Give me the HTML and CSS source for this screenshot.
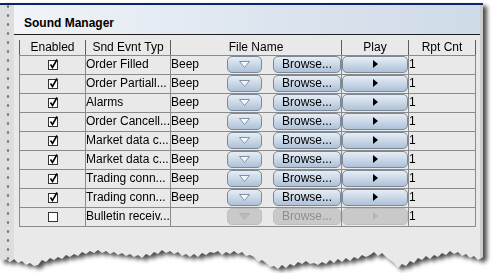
FILE: index.html
```html
<!DOCTYPE html>
<html lang="en">
<head>
    <meta charset="UTF-8">
    <meta name="viewport" content="width=device-width, initial-scale=1.0">
    <title>Sound Manager</title>
    <link rel="stylesheet" href="styles.css">
</head>
<body>
    <div class="sheet">
        <div class="paper">
            <div class="frame">
                <div class="grip"></div>
                <div class="main">
                    <div class="titlebar">Sound Manager</div>
                    <div class="content">
                        <table class="sounds">
                            <colgroup>
                                <col class="c-enabled">
                                <col class="c-type">
                                <col class="c-file">
                                <col class="c-play">
                                <col class="c-count">
                            </colgroup>
                            <thead>
                                <tr>
                                    <th>Enabled</th>
                                    <th>Snd Evnt Typ</th>
                                    <th>File Name</th>
                                    <th>Play</th>
                                    <th>Rpt Cnt</th>
                                </tr>
                            </thead>
                            <tbody>
                                <tr>
                                    <td class="check"><svg width="12" height="12" viewBox="0 0 12 12"><rect x="1.5" y="2.5" width="9" height="9" fill="#fff" stroke="#333"/><path d="M3.5 6.5 L5.5 9.5 L10 1.5" fill="none" stroke="#000" stroke-width="1.6"/></svg></td>
                                    <td>Order Filled</td>
                                    <td><div class="file"><span class="fname">Beep</span><span class="btn drop"><svg width="11" height="7" viewBox="0 0 11 7"><polygon points="0.5,0.5 10.5,0.5 5.5,6.5" fill="#f3f6fa" stroke="#8292a4"/></svg></span><span class="btn browse">Browse...</span></div></td>
                                    <td class="play-cell"><span class="btn play"><svg width="5" height="8" viewBox="0 0 5 8"><polygon points="0,0 5,4 0,8" fill="#000"/></svg></span></td>
                                    <td>1</td>
                                </tr>
                                <tr>
                                    <td class="check"><svg width="12" height="12" viewBox="0 0 12 12"><rect x="1.5" y="2.5" width="9" height="9" fill="#fff" stroke="#333"/><path d="M3.5 6.5 L5.5 9.5 L10 1.5" fill="none" stroke="#000" stroke-width="1.6"/></svg></td>
                                    <td>Order Partiall...</td>
                                    <td><div class="file"><span class="fname">Beep</span><span class="btn drop"><svg width="11" height="7" viewBox="0 0 11 7"><polygon points="0.5,0.5 10.5,0.5 5.5,6.5" fill="#f3f6fa" stroke="#8292a4"/></svg></span><span class="btn browse">Browse...</span></div></td>
                                    <td class="play-cell"><span class="btn play"><svg width="5" height="8" viewBox="0 0 5 8"><polygon points="0,0 5,4 0,8" fill="#000"/></svg></span></td>
                                    <td>1</td>
                                </tr>
                                <tr>
                                    <td class="check"><svg width="12" height="12" viewBox="0 0 12 12"><rect x="1.5" y="2.5" width="9" height="9" fill="#fff" stroke="#333"/><path d="M3.5 6.5 L5.5 9.5 L10 1.5" fill="none" stroke="#000" stroke-width="1.6"/></svg></td>
                                    <td>Alarms</td>
                                    <td><div class="file"><span class="fname">Beep</span><span class="btn drop"><svg width="11" height="7" viewBox="0 0 11 7"><polygon points="0.5,0.5 10.5,0.5 5.5,6.5" fill="#f3f6fa" stroke="#8292a4"/></svg></span><span class="btn browse">Browse...</span></div></td>
                                    <td class="play-cell"><span class="btn play"><svg width="5" height="8" viewBox="0 0 5 8"><polygon points="0,0 5,4 0,8" fill="#000"/></svg></span></td>
                                    <td>1</td>
                                </tr>
                                <tr>
                                    <td class="check"><svg width="12" height="12" viewBox="0 0 12 12"><rect x="1.5" y="2.5" width="9" height="9" fill="#fff" stroke="#333"/><path d="M3.5 6.5 L5.5 9.5 L10 1.5" fill="none" stroke="#000" stroke-width="1.6"/></svg></td>
                                    <td>Order Cancell...</td>
                                    <td><div class="file"><span class="fname">Beep</span><span class="btn drop"><svg width="11" height="7" viewBox="0 0 11 7"><polygon points="0.5,0.5 10.5,0.5 5.5,6.5" fill="#f3f6fa" stroke="#8292a4"/></svg></span><span class="btn browse">Browse...</span></div></td>
                                    <td class="play-cell"><span class="btn play"><svg width="5" height="8" viewBox="0 0 5 8"><polygon points="0,0 5,4 0,8" fill="#000"/></svg></span></td>
                                    <td>1</td>
                                </tr>
                                <tr>
                                    <td class="check"><svg width="12" height="12" viewBox="0 0 12 12"><rect x="1.5" y="2.5" width="9" height="9" fill="#fff" stroke="#333"/><path d="M3.5 6.5 L5.5 9.5 L10 1.5" fill="none" stroke="#000" stroke-width="1.6"/></svg></td>
                                    <td>Market data c...</td>
                                    <td><div class="file"><span class="fname">Beep</span><span class="btn drop"><svg width="11" height="7" viewBox="0 0 11 7"><polygon points="0.5,0.5 10.5,0.5 5.5,6.5" fill="#f3f6fa" stroke="#8292a4"/></svg></span><span class="btn browse">Browse...</span></div></td>
                                    <td class="play-cell"><span class="btn play"><svg width="5" height="8" viewBox="0 0 5 8"><polygon points="0,0 5,4 0,8" fill="#000"/></svg></span></td>
                                    <td>1</td>
                                </tr>
                                <tr>
                                    <td class="check"><svg width="12" height="12" viewBox="0 0 12 12"><rect x="1.5" y="2.5" width="9" height="9" fill="#fff" stroke="#333"/><path d="M3.5 6.5 L5.5 9.5 L10 1.5" fill="none" stroke="#000" stroke-width="1.6"/></svg></td>
                                    <td>Market data c...</td>
                                    <td><div class="file"><span class="fname">Beep</span><span class="btn drop"><svg width="11" height="7" viewBox="0 0 11 7"><polygon points="0.5,0.5 10.5,0.5 5.5,6.5" fill="#f3f6fa" stroke="#8292a4"/></svg></span><span class="btn browse">Browse...</span></div></td>
                                    <td class="play-cell"><span class="btn play"><svg width="5" height="8" viewBox="0 0 5 8"><polygon points="0,0 5,4 0,8" fill="#000"/></svg></span></td>
                                    <td>1</td>
                                </tr>
                                <tr>
                                    <td class="check"><svg width="12" height="12" viewBox="0 0 12 12"><rect x="1.5" y="2.5" width="9" height="9" fill="#fff" stroke="#333"/><path d="M3.5 6.5 L5.5 9.5 L10 1.5" fill="none" stroke="#000" stroke-width="1.6"/></svg></td>
                                    <td>Trading conn...</td>
                                    <td><div class="file"><span class="fname">Beep</span><span class="btn drop"><svg width="11" height="7" viewBox="0 0 11 7"><polygon points="0.5,0.5 10.5,0.5 5.5,6.5" fill="#f3f6fa" stroke="#8292a4"/></svg></span><span class="btn browse">Browse...</span></div></td>
                                    <td class="play-cell"><span class="btn play"><svg width="5" height="8" viewBox="0 0 5 8"><polygon points="0,0 5,4 0,8" fill="#000"/></svg></span></td>
                                    <td>1</td>
                                </tr>
                                <tr>
                                    <td class="check"><svg width="12" height="12" viewBox="0 0 12 12"><rect x="1.5" y="2.5" width="9" height="9" fill="#fff" stroke="#333"/><path d="M3.5 6.5 L5.5 9.5 L10 1.5" fill="none" stroke="#000" stroke-width="1.6"/></svg></td>
                                    <td>Trading conn...</td>
                                    <td><div class="file"><span class="fname">Beep</span><span class="btn drop"><svg width="11" height="7" viewBox="0 0 11 7"><polygon points="0.5,0.5 10.5,0.5 5.5,6.5" fill="#f3f6fa" stroke="#8292a4"/></svg></span><span class="btn browse">Browse...</span></div></td>
                                    <td class="play-cell"><span class="btn play"><svg width="5" height="8" viewBox="0 0 5 8"><polygon points="0,0 5,4 0,8" fill="#000"/></svg></span></td>
                                    <td>1</td>
                                </tr>
                                <tr>
                                    <td class="check"><svg width="12" height="12" viewBox="0 0 12 12"><rect x="1.5" y="2.5" width="9" height="9" fill="#fff" stroke="#333"/></svg></td>
                                    <td>Bulletin receiv...</td>
                                    <td><div class="file"><span class="fname"></span><span class="btn drop off"><svg width="11" height="7" viewBox="0 0 11 7"><polygon points="0.5,0.5 10.5,0.5 5.5,6.5" fill="#bdbdbd" stroke="#b0b0b0"/></svg></span><span class="btn browse off">Browse...</span></div></td>
                                    <td class="play-cell"><span class="btn play off"><svg width="5" height="8" viewBox="0 0 5 8"><polygon points="0,0 5,4 0,8" fill="#b4b4b4"/></svg></span></td>
                                    <td>1</td>
                                </tr>
                            </tbody>
                        </table>
                    </div>
                </div>
            </div>
        </div>
    </div>
</body>
</html>
```

FILE: styles.css
```css
* {
    margin: 0;
    padding: 0;
    box-sizing: border-box;
}

body {
    background: #fff;
    font-family: 'Liberation Sans', Arial, sans-serif;
    font-size: 12px;
    color: #000;
    padding-top: 3px;
}

/* torn sheet with its shadow */
.sheet {
    width: 483px;
    filter: drop-shadow(4px 3px 2px rgba(0, 0, 0, 0.7));
}

.paper {
    height: 270px;
    border-top: 2px solid #0b266b;
    background: #e9e9e9;
    clip-path: polygon(0 0, 483px 0, 483px 254px,
        478px 257px, 474px 253px, 470px 255px, 466px 251px, 462px 253px, 458px 249px, 454px 251px,
        450px 248px, 446px 252px, 442px 250px, 438px 254px, 434px 252px, 430px 256px, 426px 253px,
        422px 257px, 418px 255px, 414px 260px, 410px 258px, 406px 263px, 402px 261px, 398px 265px,
        394px 260px, 390px 257px, 386px 254px, 382px 250px, 378px 253px, 374px 249px, 370px 252px,
        366px 254px, 362px 252px, 358px 256px, 354px 254px, 350px 258px, 346px 255px, 342px 259px,
        338px 256px, 334px 260px, 330px 257px, 326px 261px, 322px 259px, 318px 262px, 314px 260px,
        310px 261px, 306px 258px, 302px 261px, 298px 259px, 294px 263px, 290px 261px, 286px 265px,
        282px 262px, 278px 266px, 274px 263px, 270px 264px, 266px 260px, 262px 257px, 258px 259px,
        254px 254px, 250px 252px, 246px 253px, 242px 249px, 238px 251px, 234px 248px, 230px 251px,
        226px 249px, 222px 252px, 218px 248px, 214px 250px, 210px 249px, 206px 252px, 202px 250px,
        198px 254px, 194px 251px, 190px 254px, 186px 251px, 182px 253px, 178px 249px, 174px 251px,
        170px 248px, 166px 250px, 162px 247px, 158px 251px, 154px 249px, 150px 253px, 146px 251px,
        142px 255px, 138px 252px, 134px 254px, 130px 251px, 126px 253px, 122px 250px, 118px 252px,
        114px 249px, 110px 251px, 106px 248px, 102px 250px, 98px 247px, 94px 250px, 90px 248px,
        86px 251px, 82px 249px, 78px 253px, 74px 251px, 70px 254px, 66px 252px, 62px 256px,
        58px 254px, 54px 257px, 50px 255px, 46px 259px, 42px 257px, 38px 262px, 34px 263px,
        30px 260px, 26px 262px, 22px 258px, 18px 260px, 14px 256px, 10px 259px, 6px 256px,
        2px 258px, 0 256px);
}

.frame {
    display: flex;
    height: 100%;
    border-right: 3px solid #cdcdcd;
}

.grip {
    width: 14px;
    flex-shrink: 0;
    background-color: #dedede;
    background-image: radial-gradient(circle, #7d7d7d 1px, transparent 1.6px);
    background-size: 16px 9px;
    background-position: 0 6px;
}

.main {
    flex: 1;
    display: flex;
    flex-direction: column;
}

.titlebar {
    height: 30px;
    padding: 10px 0 0 10px;
    line-height: 16px;
    font-size: 12px;
    font-weight: bold;
    border-bottom: 1px solid #1e1e1e;
    background: linear-gradient(90deg, #f1f4f8, #dce5ef 55%, #cfdbe8);
}

.content {
    padding: 5px 0 0 5px;
}

.sounds {
    border-collapse: collapse;
    table-layout: fixed;
    width: 456px;
    font-size: 12px;
}

.c-enabled { width: 66px; }
.c-type { width: 85px; }
.c-file { width: 171px; }
.c-play { width: 67px; }
.c-count { width: 67px; }

.sounds th {
    height: 15px;
    font-weight: normal;
    line-height: 14px;
    border: 1px solid #5e5e5e;
    border-top: none;
    border-bottom-color: #8a8a8a;
    text-align: center;
    white-space: nowrap;
}

.sounds td {
    height: 19px;
    line-height: 17px;
    border: 1px solid #8a8a8a;
    white-space: nowrap;
    overflow: hidden;
    vertical-align: top;
}

.sounds td.check {
    text-align: center;
}

.check svg {
    display: inline-block;
    vertical-align: top;
    margin-top: 2px;
}

.file {
    display: flex;
    align-items: flex-start;
}

.fname {
    width: 56px;
    flex-shrink: 0;
}

.btn {
    height: 17px;
    display: flex;
    align-items: center;
    justify-content: center;
    border: 1px solid #7c8898;
    border-radius: 5px;
    background: linear-gradient(#e6edf5, #c8d6e6 55%, #adc1d8);
    line-height: 15px;
}

.drop {
    width: 35px;
    margin-right: 11px;
}

.browse {
    width: 68px;
}

.play {
    width: 66px;
}

.btn.off {
    border-color: #bebebe;
    background: #c9c9c9;
    color: #8e8e8e;
}
```
